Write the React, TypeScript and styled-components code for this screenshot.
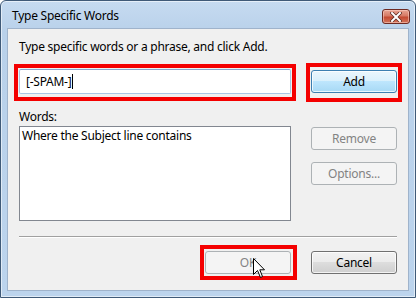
import React, { FC, ReactNode } from 'react';
import styled, { createGlobalStyle } from 'styled-components';

const GlobalStyle = createGlobalStyle`
  html, body {
    margin: 0;
    padding: 0;
    background: #ffffff;
  }
  body {
    font-family: "Noto Sans", "Open Sans", Arial, sans-serif;
    font-size: 12px;
    color: #000;
  }
`

const WindowStyle = styled.div`
  width: 416px;
  height: 298px;
  box-sizing: border-box;
  border: 1px solid #3f5a78;
  border-radius: 6px 6px 0 0;
  background: linear-gradient(180deg, #c6dbf1 0%, #b9d1ea 30px, #bcd4ed 100%);
  box-shadow: inset 0 0 0 1px rgba(255, 255, 255, 0.55);
  display: flex;
  flex-direction: column;
`

const TitleBarStyle = styled.div`
  height: 27px;
  display: flex;
  align-items: center;
  justify-content: space-between;
  padding: 0 5px 0 11px;
  & > span {
    font-size: 12px;
    color: #000;
    padding-top: 2px;
    letter-spacing: -0.25px;
  }
`

const CloseButtonStyle = styled.div`
  width: 28px;
  height: 15px;
  box-sizing: border-box;
  margin-top: 4px;
  border: 1px solid #6d2a22;
  border-radius: 3px;
  background: linear-gradient(180deg, #e8a493 0%, #d67a65 45%, #c44a32 55%, #d3745a 100%);
  box-shadow: inset 0 0 0 1px rgba(255, 220, 210, 0.5);
  display: flex;
  align-items: center;
  justify-content: center;
`

const ClientStyle = styled.div`
  flex: 1;
  margin: 0 6px 6px 6px;
  border: 1px solid #9fb3cb;
  background: #f0f0f0;
  padding: 10px 11px 0 11px;
  display: flex;
  flex-direction: column;
  letter-spacing: -0.25px;
`

const InstructionStyle = styled.div`
  line-height: 15px;
`

const RowStyle = styled.div<{ $top: number }>`
  display: grid;
  grid-template-columns: 272px 86px;
  column-gap: 20px;
  margin-top: ${p => p.$top}px;
`

const InputStyle = styled.div`
  height: 25px;
  box-sizing: border-box;
  border: 1px solid #a9c6e4;
  border-top-color: #86a9cf;
  border-radius: 2px;
  background: #fff;
  display: flex;
  align-items: center;
  padding-left: 6px;
  & > i {
    display: inline-block;
    width: 1px;
    height: 15px;
    background: #000;
    margin-left: 1px;
  }
`

const LabelStyle = styled.div`
  margin-top: 15px;
  line-height: 15px;
`

const ListBoxStyle = styled.div`
  height: 95px;
  box-sizing: border-box;
  border: 1px solid #828790;
  background: #fff;
  padding: 1px 2px;
  line-height: 15px;
`

const ButtonColumnStyle = styled.div`
  display: flex;
  flex-direction: column;
  gap: 12px;
  padding-top: 1px;
`

const ButtonStyle = styled.div<{ $kind: 'normal' | 'default' | 'disabled' }>`
  width: 86px;
  height: 23px;
  box-sizing: border-box;
  border-radius: 3px;
  display: flex;
  align-items: center;
  justify-content: center;
  font-size: 12px;
  border: 1px solid ${p => p.$kind === 'default' ? '#3c7fb1' : p.$kind === 'disabled' ? '#adb2b5' : '#707070'};
  color: ${p => p.$kind === 'disabled' ? '#838383' : '#000'};
  background: ${p => p.$kind === 'default'
    ? 'linear-gradient(180deg, #eaf6fd 0%, #d9f0fc 50%, #bee6fd 50%, #a7d9f5 100%)'
    : p.$kind === 'disabled'
      ? '#f4f4f4'
      : 'linear-gradient(180deg, #f2f2f2 0%, #ebebeb 50%, #dddddd 50%, #cfcfcf 100%)'};
  box-shadow: ${p => p.$kind === 'disabled' ? 'none' : 'inset 0 0 0 1px rgba(255,255,255,0.75)'};
`

const SeparatorStyle = styled.div`
  margin-top: 15px;
  height: 1px;
  background: #a0a0a0;
  border-bottom: 1px solid #ffffff;
`

const FooterStyle = styled.div`
  display: flex;
  justify-content: flex-end;
  gap: 20px;
  margin-top: 13px;
`

const HighlightStyle = styled.div<{ $t: number; $r: number; $b: number; $l: number }>`
  position: relative;
  &::after {
    content: "";
    position: absolute;
    top: -${p => p.$t}px;
    right: -${p => p.$r}px;
    bottom: -${p => p.$b}px;
    left: -${p => p.$l}px;
    border: 4px solid #f40000;
    pointer-events: none;
  }
`

const CursorStyle = styled.svg`
  position: absolute;
  left: 48px;
  top: 7px;
  z-index: 2;
`

interface HighlightProps {
    t: number;
    r: number;
    b: number;
    l: number;
    children: ReactNode;
}

const Highlight: FC<HighlightProps> = ({ t, r, b, l, children }) =>
    <HighlightStyle $t={t} $r={r} $b={b} $l={l}>{children}</HighlightStyle>

const App: FC = () => {
    return <>
        <GlobalStyle />
        <WindowStyle>
            <TitleBarStyle>
                <span>Type Specific Words</span>
                <CloseButtonStyle>
                    <svg width="12" height="10" viewBox="0 0 12 10">
                        <path d="M2 1 L10 9 M10 1 L2 9" stroke="#5a2a20" strokeWidth="3.4" strokeLinecap="square" />
                        <path d="M2 1 L10 9 M10 1 L2 9" stroke="#ffffff" strokeWidth="2" strokeLinecap="square" />
                    </svg>
                </CloseButtonStyle>
            </TitleBarStyle>
            <ClientStyle>
                <InstructionStyle>Type specific words or a phrase, and click Add.</InstructionStyle>
                <RowStyle $top={15} style={{ alignItems: 'center' }}>
                    <Highlight t={5} r={5} b={7} l={5}>
                        <InputStyle>[-SPAM-]<i /></InputStyle>
                    </Highlight>
                    <Highlight t={7} r={5} b={9} l={5}>
                        <ButtonStyle $kind="default">Add</ButtonStyle>
                    </Highlight>
                </RowStyle>
                <LabelStyle>Words:</LabelStyle>
                <RowStyle $top={2}>
                    <ListBoxStyle>Where the Subject line contains</ListBoxStyle>
                    <ButtonColumnStyle>
                        <ButtonStyle $kind="disabled">Remove</ButtonStyle>
                        <ButtonStyle $kind="disabled">Options...</ButtonStyle>
                    </ButtonColumnStyle>
                </RowStyle>
                <SeparatorStyle />
                <FooterStyle>
                    <Highlight t={6} r={6} b={6} l={5}>
                        <ButtonStyle $kind="disabled">OK</ButtonStyle>
                        <CursorStyle width="13" height="21" viewBox="0 0 13 21">
                            <path d="M0.5 0.5 L0.5 16.5 L4.5 12.5 L7.5 19.5 L9.5 18.5 L6.8 11.8 L11.5 11.8 Z"
                                fill="#ffffff" stroke="#000000" strokeWidth="1" strokeLinejoin="miter" />
                        </CursorStyle>
                    </Highlight>
                    <ButtonStyle $kind="normal">Cancel</ButtonStyle>
                </FooterStyle>
            </ClientStyle>
        </WindowStyle>
    </>
}

export default App
